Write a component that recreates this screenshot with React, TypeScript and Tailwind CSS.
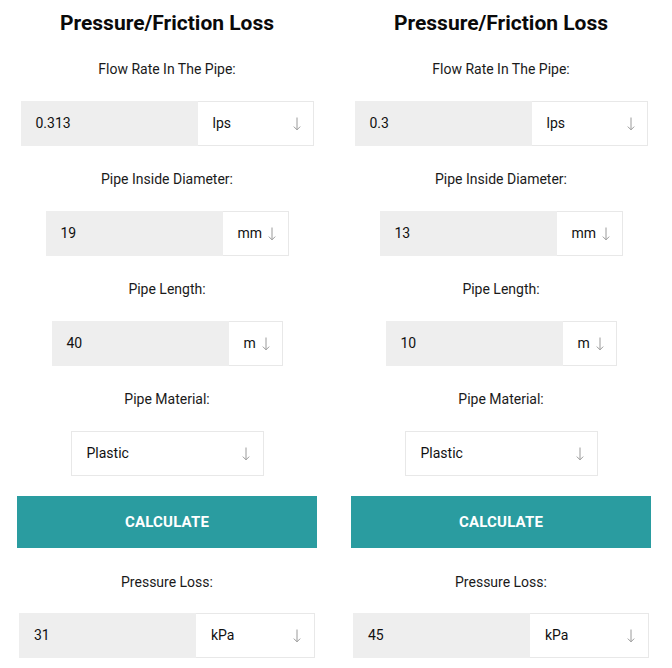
import React from 'react';

type Field = {
  label: string;
  value: string;
  unit: string;
  unitWidth: string;
};

function Arrow() {
  return (
    <svg className="w-[8px] h-[14px] text-[#9a9a9a] shrink-0" viewBox="0 0 8 14" fill="none" stroke="currentColor" strokeWidth="1">
      <path d="M4 0.5v12.5" />
      <path d="M0.8 9.6L4 12.8l3.2-3.2" />
    </svg>
  );
}

function Label({ children }: { children: React.ReactNode }) {
  return <div className="h-5 leading-5 text-[14px] text-[#1a1a1a] text-center">{children}</div>;
}

function InputRow({ value, unit, unitWidth }: { value: string; unit: string; unitWidth: string }) {
  return (
    <div className="flex justify-center">
      <div className="flex h-[45px]">
        <div className="w-[177px] bg-[#eeeeee] flex items-center pl-[15px] text-[14px] text-[#111]">{value}</div>
        <div className={`${unitWidth} border border-l-0 border-[#e8e8e8] bg-white flex items-center justify-between pl-[15px] pr-[12px] text-[14px] text-[#111]`}>
          <span>{unit}</span>
          <Arrow />
        </div>
      </div>
    </div>
  );
}

function Calculator({ flow, diameter, length, result }: { flow: string; diameter: string; length: string; result: string }) {
  const fields: Field[] = [
    { label: 'Flow Rate In The Pipe:', value: flow, unit: 'lps', unitWidth: 'w-[116px]' },
    { label: 'Pipe Inside Diameter:', value: diameter, unit: 'mm', unitWidth: 'w-[66px]' },
    { label: 'Pipe Length:', value: length, unit: 'm', unitWidth: 'w-[54px]' },
  ];

  return (
    <div className="w-[300px] flex flex-col">
      <h2 className="text-[21px] font-bold text-[#0a0a0a] text-center leading-[28px] mt-[9px]">Pressure/Friction Loss</h2>
      <div className="mt-[22px] flex flex-col">
        {fields.map((f, i) => (
          <div key={f.label} className={i > 0 ? 'mt-[23px]' : ''}>
            <Label>{f.label}</Label>
            <div className="mt-[22px]">
              <InputRow value={f.value} unit={f.unit} unitWidth={f.unitWidth} />
            </div>
          </div>
        ))}

        <div className="mt-[23px]">
          <Label>Pipe Material:</Label>
          <div className="mt-[22px] flex justify-center">
            <div className="w-[193px] h-[45px] border border-[#e8e8e8] bg-white flex items-center justify-between pl-[15px] pr-[13px] text-[14px] text-[#111]">
              <span>Plastic</span>
              <Arrow />
            </div>
          </div>
        </div>

        <button className="mt-[20px] h-[52px] w-full bg-[#2a9ca0] text-white font-bold text-[15px] tracking-[0.2px]">CALCULATE</button>

        <div className="mt-[24px]">
          <Label>Pressure Loss:</Label>
          <div className="mt-[21px]">
            <div className="flex justify-center">
              <div className="flex h-[45px]">
                <div className="w-[177px] bg-[#eeeeee] flex items-center pl-[15px] text-[14px] text-[#111]">{result}</div>
                <div className="w-[119px] border border-l-0 border-[#e8e8e8] bg-white flex items-center justify-between pl-[15px] pr-[13px] text-[14px] text-[#111]">
                  <span>kPa</span>
                  <Arrow />
                </div>
              </div>
            </div>
          </div>
        </div>
      </div>
    </div>
  );
}

export default function App() {
  return (
    <div className="w-[672px] h-[668px] bg-white overflow-hidden" style={{ fontFamily: 'Roboto, "Liberation Sans", sans-serif' }}>
      <div className="flex gap-[34px] pl-[17px]">
        <Calculator flow="0.313" diameter="19" length="40" result="31" />
        <Calculator flow="0.3" diameter="13" length="10" result="45" />
      </div>
    </div>
  );
}
